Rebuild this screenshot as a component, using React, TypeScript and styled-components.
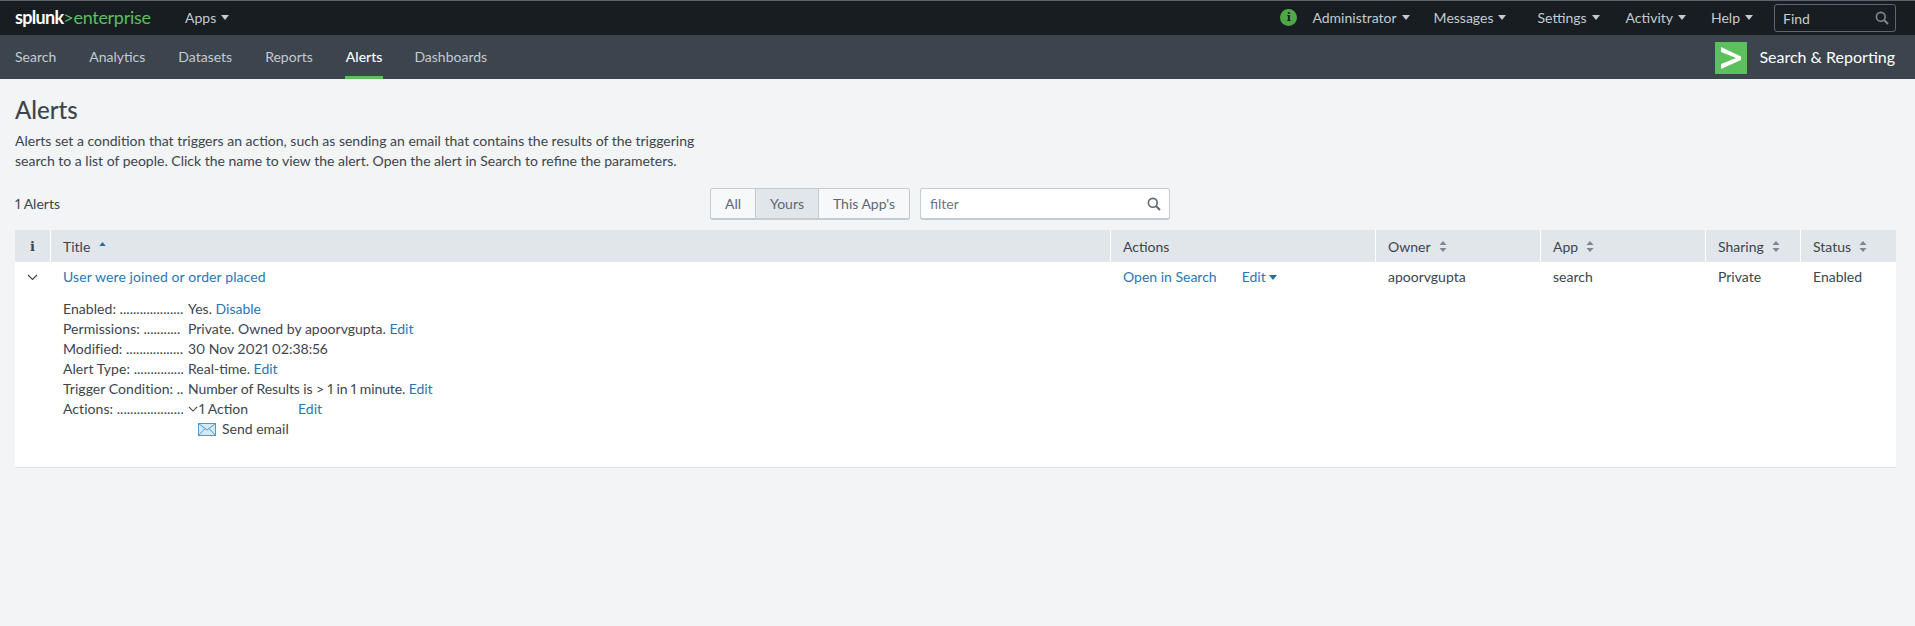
import React from "react";
import styled, { createGlobalStyle } from "styled-components";

const Global = createGlobalStyle`
  html, body { margin: 0; padding: 0; background: #f2f4f5; }
  body {
    font-family: Lato, "Open Sans", "Liberation Sans", sans-serif;
    font-size: 14px;
    color: #3c444d;
    font-variant-numeric: proportional-nums;
  }
  * { box-sizing: border-box; }
`;

const COLS = "35px 1060px 265px 165px 165px 95px 96px";

const Page = styled.div`
  width: 1915px;
  height: 626px;
  overflow: hidden;
`;
const TopBar = styled.header`
  height: 35px;
  background: #171d21;
  border-top: 1px solid #59636c;
  display: flex;
  align-items: center;
  padding: 0 19px 2px 15px;
  color: #c3cbd4;
`;
const Logo = styled.div`
  font-size: 18px;
  line-height: 1;
  letter-spacing: -0.3px;
  color: #5cc05c;
  width: 170px;
  display: flex;
  b { color: #fff; font-weight: 700; letter-spacing: -0.7px; }
`;
const TopItem = styled.span`
  display: inline-flex;
  align-items: center;
  gap: 5px;
  margin-left: ${(p: { $ml?: number }) => p.$ml ?? 0}px;
  white-space: nowrap;
`;
const Caret = styled.i<{ $c?: string }>`
  display: inline-block;
  width: 0;
  height: 0;
  border-left: 4.5px solid transparent;
  border-right: 4.5px solid transparent;
  border-top: 5px solid ${(p) => p.$c ?? "#c3cbd4"};
`;
const Spacer = styled.div`
  flex: 1;
`;
const InfoDot = styled.span`
  width: 17px;
  height: 17px;
  border-radius: 50%;
  background: #4fa846;
  color: #171d21;
  font: 700 11px/17px "DejaVu Serif", serif;
  text-align: center;
`;
const FindBox = styled.div`
  width: 122px;
  height: 28px;
  margin: 2px 0 0 21px;
  border: 1px solid #5c6773;
  border-radius: 3px;
  display: flex;
  align-items: center;
  justify-content: space-between;
  padding: 0 6px 0 8px;
`;
const AppBar = styled.nav`
  height: 44px;
  background: #3c444d;
  display: flex;
  align-items: stretch;
  padding: 0 19px 0 15px;
`;
const NavItem = styled.a<{ $active?: boolean }>`
  display: flex;
  align-items: center;
  margin: 0 ${(p) => (p.$active ? 31 : 33)}px 0 ${(p) => (p.$active ? -1 : 0)}px;
  padding: 0 ${(p) => (p.$active ? 1 : 0)}px;
  color: ${(p) => (p.$active ? "#fff" : "#c3cbd4")};
  border-bottom: 3px solid ${(p) => (p.$active ? "#5cc05c" : "transparent")};
  border-top: 1px solid transparent;
  font-weight: ${(p) => (p.$active ? 500 : 400)};
`;
const AppName = styled.div`
  display: flex;
  align-items: center;
  gap: 12px;
  color: #fff;
  font-size: 16px;
  margin-right: 1px;
  svg { margin-top: 1px; }
  span { margin-top: -2px; }
`;
const Main = styled.main`
  padding: 0 19px 0 15px;
`;
const Title = styled.h1`
  margin: 0;
  padding-top: 16px;
  font-size: 24px;
  line-height: 30px;
  font-weight: 500;
  color: #3c444d;
`;
const Desc = styled.p`
  margin: 6px 0 0;
  width: 720px;
  line-height: 20px;
`;
const Controls = styled.div`
  height: 32px;
  margin-top: 17px;
  display: grid;
  grid-template-columns: 695px 200px 250px;
  align-items: center;
`;
const Count = styled.div`
  margin-top: -1px;
`;
const Group = styled.div`
  display: flex;
  width: 200px;
  height: 32px;
  border: 1px solid #c3cbd4;
  border-bottom-width: 2px;
  border-radius: 3px;
  overflow: hidden;
  background: #f7f8fa;
`;
const GroupBtn = styled.div<{ $on?: boolean; $w: number }>`
  width: ${(p) => p.$w}px;
  display: flex;
  align-items: center;
  justify-content: center;
  background: ${(p) => (p.$on ? "#e1e6eb" : "#f7f8fa")};
  border-left: ${(p) => (p.$w === 44 ? "0" : "1px solid #c3cbd4")};
  color: #5c6773;
`;
const Filter = styled.div`
  width: 250px;
  margin-left: 10px;
  height: 32px;
  background: #fff;
  border: 1px solid #c3cbd4;
  border-bottom-width: 2px;
  border-radius: 3px;
  display: flex;
  align-items: center;
  justify-content: space-between;
  padding: 0 8px 0 9px;
  color: #6b7785;
`;
const Table = styled.section`
  margin-top: 10px;
  width: 1881px;
  background: #fff;
  border-bottom: 1px solid #e1e6eb;
`;
const HeadRow = styled.div`
  display: grid;
  grid-template-columns: ${COLS};
  height: 32px;
  background: #e1e6eb;
`;
const HeadCell = styled.div<{ $first?: boolean }>`
  display: flex;
  align-items: center;
  gap: 8px;
  padding-left: 12px;
  border-left: ${(p) => (p.$first ? "0" : "1px solid #fff")};
  color: #3c444d;
`;
const InfoHead = styled(HeadCell)`
  justify-content: center;
  padding: 0;
  font: 700 13px "DejaVu Serif", serif;
`;
const SortUp = styled.svg`
  margin: -4px 0 0 1px;
`;
const BodyRow = styled.div`
  display: grid;
  grid-template-columns: ${COLS};
  height: 205px;
`;
const Cell = styled.div`
  padding: 5px 0 0 13px;
  line-height: 20px;
`;
const TitleLink = styled.a`
  color: #2a76b3;
  letter-spacing: 0.1px;
`;
const ChevronCell = styled.div`
  padding: 5px 0 0 12px;
`;
const Link = styled.a`
  color: #2a76b3;
`;
const Details = styled.div`
  margin-top: 12px;
`;
const DetailRow = styled.div`
  display: grid;
  grid-template-columns: 120px 1fr;
  column-gap: 5px;
  height: 20px;
  line-height: 20px;
  white-space: nowrap;
`;
const Label = styled.div`
  overflow: hidden;
  letter-spacing: 0.05px;
`;
const TightValue = styled.div`
  letter-spacing: -0.1px;
`;
const Actions = styled.div`
  display: flex;
`;
const ActionsLeft = styled.span`
  width: 110px;
  display: inline-flex;
  align-items: center;
  gap: 1px;
`;
const MailLine = styled.div`
  display: flex;
  align-items: center;
  gap: 6px;
  margin-left: 10px;
  height: 20px;
`;
const OpenLink = styled(Link)`
  margin-right: 25px;
`;
const EditMenu = styled(Link)`
  display: inline-flex;
  align-items: center;
  gap: 3px;
`;

const Search = ({ c = "#c3cbd4" }: { c?: string }) => (
  <svg width="14" height="14" viewBox="0 0 14 14" fill="none" stroke={c} strokeWidth="1.6">
    <circle cx="5.8" cy="5.8" r="4.4" />
    <path d="M9 9l4 4" strokeWidth="2" />
  </svg>
);
const Sort = () => (
  <svg width="8" height="11" viewBox="0 0 8 11" fill="#7b8794">
    <path d="M4 0l3.5 4h-7zM4 11L.5 7h7z" />
  </svg>
);
const Chevron = ({ s = 11 }: { s?: number }) => (
  <svg width={s} height={s * 0.64} viewBox="0 0 11 7" fill="none" stroke="#3c444d" strokeWidth="1.2">
    <path d="M1 1l4.5 4.5L10 1" />
  </svg>
);

const dots = (n: number) => ".".repeat(n);

function Sortable({ label }: { label: string }) {
  return (
    <HeadCell>
      {label} <Sort />
    </HeadCell>
  );
}

export default function App() {
  return (
    <Page>
      <Global />
      <TopBar>
        <Logo>
          <b>splunk</b>&gt;enterprise
        </Logo>
        <TopItem>
          Apps <Caret />
        </TopItem>
        <Spacer />
        <InfoDot>i</InfoDot>
        <TopItem $ml={15}>Administrator <Caret /></TopItem>
        <TopItem $ml={24}>Messages <Caret /></TopItem>
        <TopItem $ml={31}>Settings <Caret /></TopItem>
        <TopItem $ml={26}>Activity <Caret /></TopItem>
        <TopItem $ml={25}>Help <Caret /></TopItem>
        <FindBox>
          Find <Search c="#7b8794" />
        </FindBox>
      </TopBar>
      <AppBar>
        <NavItem>Search</NavItem>
        <NavItem>Analytics</NavItem>
        <NavItem>Datasets</NavItem>
        <NavItem>Reports</NavItem>
        <NavItem $active>Alerts</NavItem>
        <NavItem>Dashboards</NavItem>
        <Spacer />
        <AppName>
          <svg width="32" height="32" viewBox="0 0 32 32">
            <rect width="32" height="32" fill="#5cc05c" />
            <path d="M6 5l20 9.5v3.5L6 27v-5l15-6L6 10z" fill="#fff" />
          </svg>
          <span>Search &amp; Reporting</span>
        </AppName>
      </AppBar>
      <Main>
        <Title>Alerts</Title>
        <Desc>
          Alerts set a condition that triggers an action, such as sending an email that contains the results of the
          triggering search to a list of people. Click the name to view the alert. Open the alert in Search to refine
          the parameters.
        </Desc>
        <Controls>
          <Count>1 Alerts</Count>
          <Group>
            <GroupBtn $w={44}>All</GroupBtn>
            <GroupBtn $w={63} $on>Yours</GroupBtn>
            <GroupBtn $w={91}>This App's</GroupBtn>
          </Group>
          <Filter>
            filter <Search c="#5c6773" />
          </Filter>
        </Controls>
        <Table>
          <HeadRow>
            <InfoHead $first>i</InfoHead>
            <HeadCell>
              Title
              <SortUp width="7" height="4" viewBox="0 0 8 5" fill="#1e6fa8">
                <path d="M4 0l4 5H0z" />
              </SortUp>
            </HeadCell>
            <HeadCell>Actions</HeadCell>
            <Sortable label="Owner" />
            <Sortable label="App" />
            <Sortable label="Sharing" />
            <Sortable label="Status" />
          </HeadRow>
          <BodyRow>
            <ChevronCell><Chevron /></ChevronCell>
            <Cell>
              <TitleLink>User were joined or order placed</TitleLink>
              <Details>
                <DetailRow><Label>Enabled: {dots(19)}</Label><div>Yes. <Link>Disable</Link></div></DetailRow>
                <DetailRow><Label>Permissions: {dots(11)}</Label><div>Private. Owned by apoorvgupta. <Link>Edit</Link></div></DetailRow>
                <DetailRow><Label>Modified: {dots(17)}</Label><div>30 Nov 2021 02:38:56</div></DetailRow>
                <DetailRow><Label>Alert Type: {dots(15)}</Label><div>Real-time. <Link>Edit</Link></div></DetailRow>
                <DetailRow><Label>Trigger Condition: {dots(2)}</Label><TightValue>Number of Results is &gt; 1 in 1 minute. <Link>Edit</Link></TightValue></DetailRow>
                <DetailRow>
                  <Label>Actions: {dots(20)}</Label>
                  <Actions>
                    <ActionsLeft><Chevron s={10} />1 Action</ActionsLeft>
                    <Link>Edit</Link>
                  </Actions>
                </DetailRow>
                <DetailRow>
                  <div />
                  <MailLine>
                    <svg width="18" height="13" viewBox="0 0 18 13" fill="#d5e8f5" stroke="#4a9bd0" strokeWidth="1">
                      <rect x=".5" y=".5" width="17" height="12" />
                      <path d="M.5.5L9 7l8.5-6.5M.5 12.5L7 5.5M17.5 12.5L11 5.5" fill="none" />
                    </svg>
                    Send email
                  </MailLine>
                </DetailRow>
              </Details>
            </Cell>
            <Cell>
              <OpenLink>Open in Search</OpenLink>
              <EditMenu>Edit <Caret $c="#1e6fa8" /></EditMenu>
            </Cell>
            <Cell>apoorvgupta</Cell>
            <Cell>search</Cell>
            <Cell>Private</Cell>
            <Cell>Enabled</Cell>
          </BodyRow>
        </Table>
      </Main>
    </Page>
  );
}
